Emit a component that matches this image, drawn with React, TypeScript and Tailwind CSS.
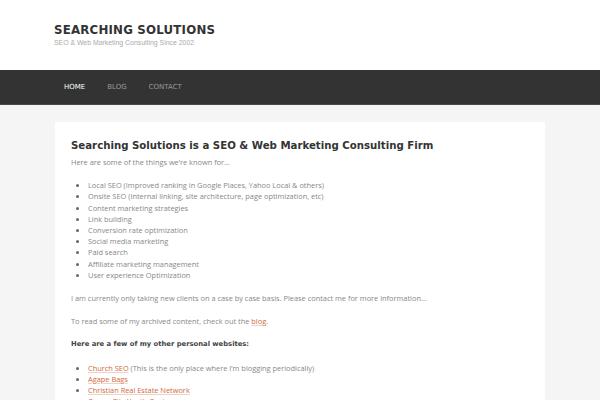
const services = [
  'Local SEO (Improved ranking in Google Places, Yahoo Local & others)',
  'Onsite SEO (Internal linking, site architecture, page optimization, etc)',
  'Content marketing strategies',
  'Link building',
  'Conversion rate optimization',
  'Social media marketing',
  'Paid search',
  'Affiliate marketing management',
  'User experience Optimization',
];

const sites = [
  { name: 'Church SEO', note: ' (This is the only place where I\u2019m blogging periodically)' },
  { name: 'Agape Bags' },
  { name: 'Christian Real Estate Network' },
  { name: 'Canon City Youth Center' },
];

function SiteLink({ children }: { children: React.ReactNode }) {
  return (
    <a href="#" className="text-[#d0693c] underline decoration-[#f0d2c4]">
      {children}
    </a>
  );
}

export default function App() {
  return (
    <div className="h-[400px] w-[600px] overflow-hidden bg-[#f5f5f5] font-['Open_Sans',sans-serif]">
      {/* Site header */}
      <header className="h-[70px] bg-white px-[54px] pt-[23px]">
        <h1 className="font-['DejaVu_Sans',sans-serif] text-[11.8px] font-bold leading-[14px] tracking-[0.2px] text-[#333]">
          SEARCHING SOLUTIONS
        </h1>
        <p className="mt-px font-['Liberation_Sans',sans-serif] text-[6.9px] leading-[9px] text-[#aaa]">
          SEO &amp; Web Marketing Consulting Since 2002
        </p>
      </header>

      {/* Nav */}
      <nav className="h-[35px] border-b border-[#4a4a4a] bg-[#333]">
        <ul className="flex h-full items-center gap-[22px] px-[64px] font-['DejaVu_Sans',sans-serif] text-[7px] uppercase text-[#999]">
          <li className="text-white">Home</li>
          <li>Blog</li>
          <li>Contact</li>
        </ul>
      </nav>

      {/* Content */}
      <main className="mx-[55px] mt-[17px] bg-white px-[16px] pt-[17px] pb-4 text-[7.4px] leading-[11.2px] text-[#888]">
        <h2 className="font-['DejaVu_Sans',sans-serif] text-[10.2px] font-bold leading-[14px] text-[#333]">
          Searching Solutions is a SEO &amp; Web Marketing Consulting Firm
        </h2>
        <p className="mt-[4px]">Here are some of the things we&rsquo;re known for&hellip;</p>
        <ul className="mt-[12px] list-disc pl-[17px] marker:text-[#666]">
          {services.map((s) => (
            <li key={s}>{s}</li>
          ))}
        </ul>
        <p className="mt-[12px]">
          I am currently only taking new clients on a case by case basis. Please contact me for more information&hellip;
        </p>
        <p className="mt-[12px]">
          To read some of my archived content, check out the <SiteLink>blog</SiteLink>.
        </p>
        <p className="mt-[12px] font-['DejaVu_Sans',sans-serif] text-[6.8px] font-bold text-[#444]">
          Here are a few of my other personal websites:
        </p>
        <ul className="mt-[12px] list-disc pl-[17px] marker:text-[#666]">
          {sites.map((s) => (
            <li key={s.name}>
              <SiteLink>{s.name}</SiteLink>
              {s.note}
            </li>
          ))}
        </ul>
      </main>
    </div>
  );
}
